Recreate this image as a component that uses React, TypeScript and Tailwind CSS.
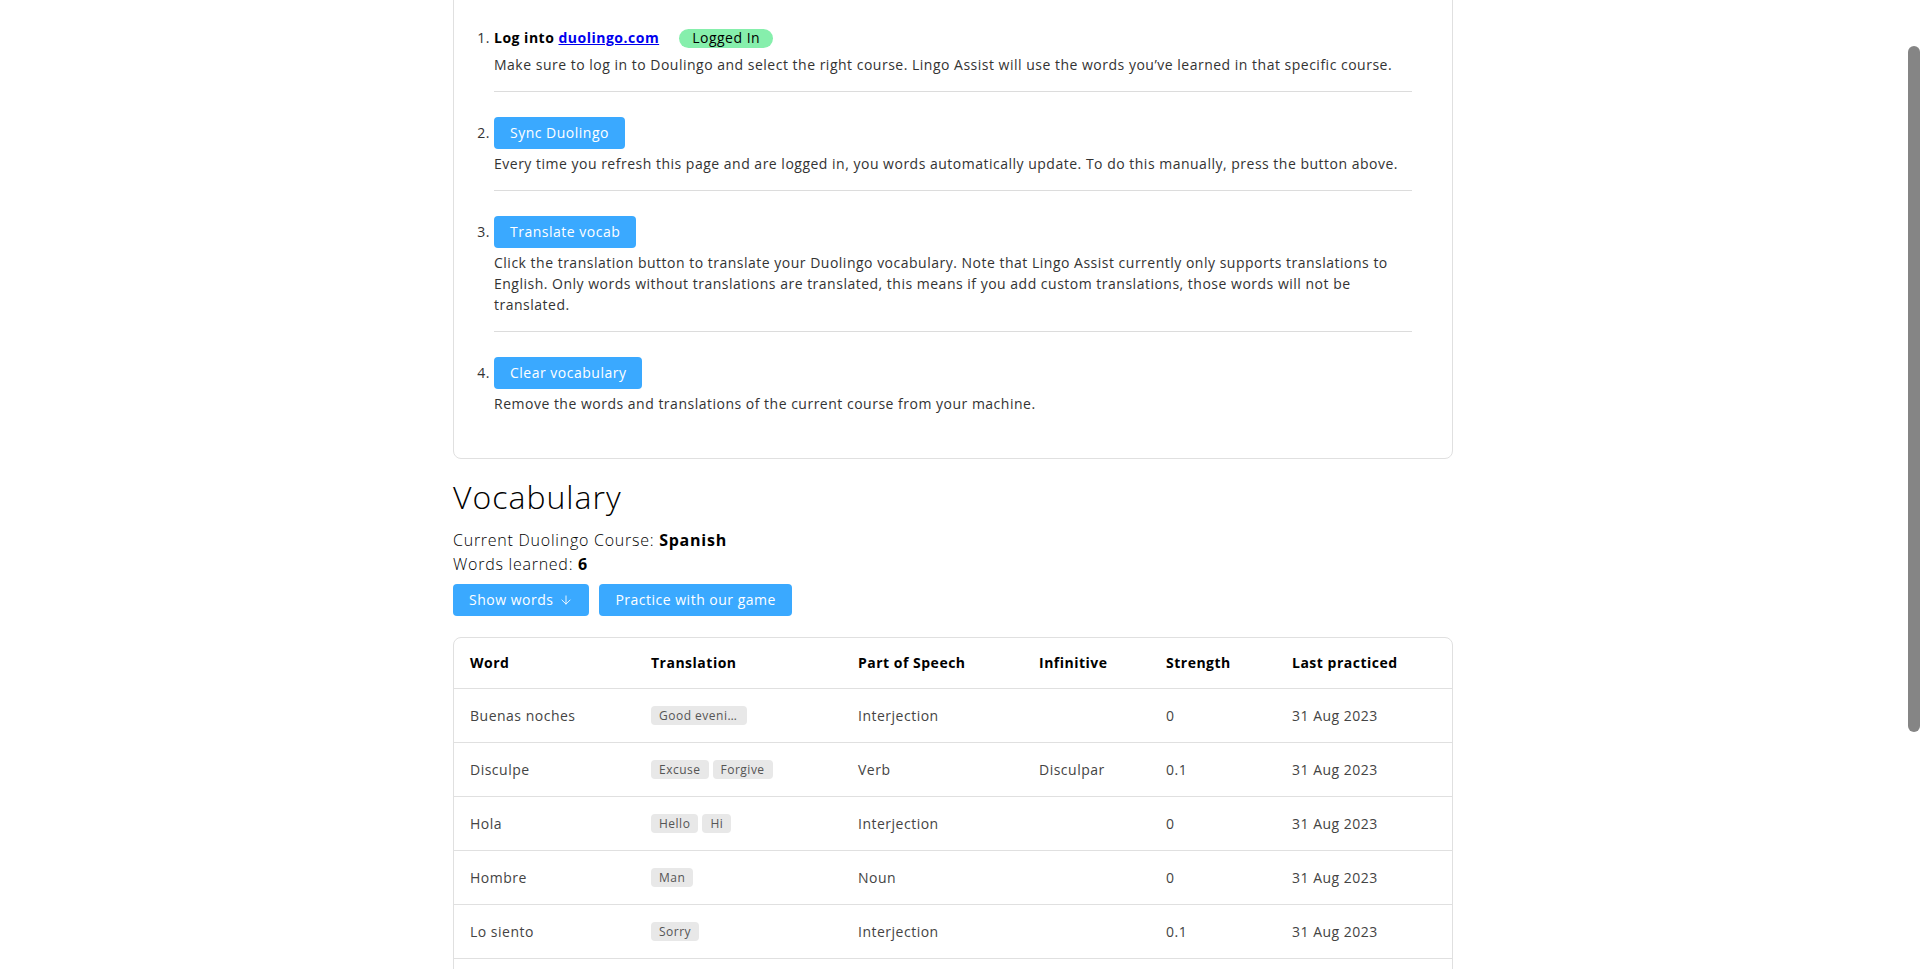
import { ArrowDown } from "lucide-react";

const steps = [
  {
    button: "Sync Duolingo",
    text: "Every time you refresh this page and are logged in, you words automatically update. To do this manually, press the button above.",
  },
  {
    button: "Translate vocab",
    text: "Click the translation button to translate your Duolingo vocabulary. Note that Lingo Assist currently only supports translations to English. Only words without translations are translated, this means if you add custom translations, those words will not be translated.",
  },
  {
    button: "Clear vocabulary",
    text: "Remove the words and translations of the current course from your machine.",
  },
];

const words = [
  { word: "Buenas noches", tr: ["Good evening"], pos: "Interjection", inf: "", strength: "0", date: "31 Aug 2023" },
  { word: "Disculpe", tr: ["Excuse", "Forgive"], pos: "Verb", inf: "Disculpar", strength: "0.1", date: "31 Aug 2023" },
  { word: "Hola", tr: ["Hello", "Hi"], pos: "Interjection", inf: "", strength: "0", date: "31 Aug 2023" },
  { word: "Hombre", tr: ["Man"], pos: "Noun", inf: "", strength: "0", date: "31 Aug 2023" },
  { word: "Lo siento", tr: ["Sorry"], pos: "Interjection", inf: "", strength: "0.1", date: "31 Aug 2023" },
  { word: "Mujer", tr: ["Woman"], pos: "Noun", inf: "", strength: "0", date: "31 Aug 2023" },
];

const cols = "grid grid-cols-[181px_207px_181px_127px_126px_1fr]";

function BlueButton({ children }: { children: React.ReactNode }) {
  return (
    <button className="inline-flex h-8 items-center gap-1.5 rounded bg-[#3aa9ff] px-4 text-sm tracking-[0.5px] text-white">
      {children}
    </button>
  );
}

export default function App() {
  return (
    <div className="flex h-screen w-full overflow-hidden bg-white font-['Open_Sans',sans-serif] tracking-[0.5px] text-black">
      <main className="flex-1 overflow-hidden">
        <div className="mx-auto -mt-[20px] w-[1000px]">
          <div className="rounded-lg border border-[#e0e0e0] px-4 pt-[45px] pb-[28px]">
            <ol className="list-decimal px-6 text-sm marker:text-[#333]">
              <li className="border-b border-[#dcdcdc] pb-4">
                <div className="flex h-6 items-center">
                  <span className="font-bold">
                    Log into{" "}
                    <a href="#" className="text-[#0000ee] underline">
                      duolingo.com
                    </a>
                  </span>
                  <span className="ml-5 inline-flex h-[19px] items-center rounded-full bg-[#86efac] px-[13px] font-medium">
                    Logged In
                  </span>
                </div>
                <p className="mt-1 leading-[21px] text-[#333]">
                  Make sure to log in to Doulingo and select the right course. Lingo Assist will use the words you’ve learned in that specific course.
                </p>
              </li>
              {steps.map((s, i) => (
                <li
                  key={s.button}
                  className={
                    "mt-[25px] pb-4 " +
                    (i < steps.length - 1 ? "border-b border-[#dcdcdc]" : "")
                  }
                >
                  <BlueButton>{s.button}</BlueButton>
                  <p className="mt-1 leading-[21px] text-[#333]">{s.text}</p>
                </li>
              ))}
            </ol>
          </div>

          <h2 className="mt-[19px] text-[32px] leading-[38px] font-light tracking-[1px]">Vocabulary</h2>
          <p className="mt-3 text-base leading-6 font-light tracking-[0.75px]">
            Current Duolingo Course: <span className="font-bold">Spanish</span>
          </p>
          <p className="text-base leading-6 font-light tracking-[0.75px]">
            Words learned: <span className="font-bold">6</span>
          </p>
          <div className="mt-2 flex gap-[10px]">
            <BlueButton>
              Show words <ArrowDown className="h-3.5 w-3.5" strokeWidth={1.5} />
            </BlueButton>
            <BlueButton>Practice with our game</BlueButton>
          </div>

          <div className="mt-[21px] overflow-hidden rounded-lg border border-[#e0e0e0] text-sm">
            <div className={cols + " h-[51px] items-center border-b border-[#e0e0e0] font-bold"}>
              <div className="px-4">Word</div>
              <div className="px-4">Translation</div>
              <div className="px-4">Part of Speech</div>
              <div className="px-4">Infinitive</div>
              <div className="px-4">Strength</div>
              <div className="px-4">Last practiced</div>
            </div>
            {words.map((w) => (
              <div
                key={w.word}
                className={cols + " h-[54px] items-center border-b border-[#e0e0e0] text-[#444]"}
              >
                <div className="px-4">{w.word}</div>
                <div className="flex gap-1 px-4">
                  {w.tr.map((t) => (
                    <span
                      key={t}
                      className="inline-block h-[19px] max-w-[96px] truncate rounded bg-[#e8e8e8] px-2 text-xs leading-[19px] text-[#555]"
                    >
                      {t}
                    </span>
                  ))}
                </div>
                <div className="px-4">{w.pos}</div>
                <div className="px-4">{w.inf}</div>
                <div className="px-4">{w.strength}</div>
                <div className="px-4">{w.date}</div>
              </div>
            ))}
          </div>
        </div>
      </main>
      <div className="flex w-[14px] justify-end">
        <div className="mt-[46px] h-[686px] w-[12px] rounded-full bg-[#858585]" />
      </div>
    </div>
  );
}
